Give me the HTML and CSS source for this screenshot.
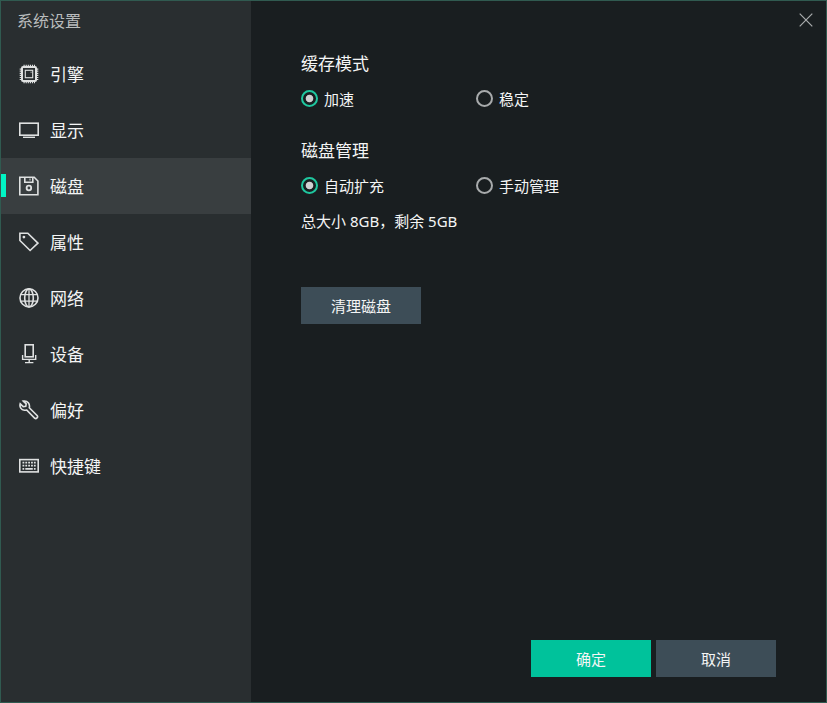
FILE: index.html
```html
<!DOCTYPE html>
<html lang="zh-CN">
<head>
  <meta charset="UTF-8">
  <title>系统设置</title>
  <link rel="stylesheet" href="styles.css">
</head>
<body>

  <div class="window">
    <!-- 左侧菜单 -->
    <div class="sidebar">
      <h1>系统设置</h1>
      <ul class="menu">
        <li>
          <svg viewBox="0 0 20 20"><rect x="3" y="3" width="14" height="14" rx="1" stroke-width="2"/><rect x="6.3" y="6.3" width="7.4" height="7.4" stroke-width="1.1"/><path d="M4.5 1.5H16M4.5 18.5H16M1.5 4.5V16M18.5 4.5V16" stroke-width="1.6" stroke-dasharray="1.2 .9"/><path d="M11.6 8.2h1" stroke-width="1"/></svg>
          <span>引擎</span>
        </li>
        <li>
          <svg viewBox="0 0 20 20"><rect x=".8" y="3.2" width="18.4" height="12"/><path d="M4 17.3h12" stroke-width="1.4"/></svg>
          <span>显示</span>
        </li>
        <li class="active">
          <svg viewBox="0 0 20 20"><path d="M.8 1.2H15.2L18.9 5V18.8H.8ZM5.8 1.2V6.3H13.8V1.2"/><path d="M11 2.5V4.5" stroke-width="1"/><circle cx="9.9" cy="12" r="2.3" stroke-width="1.8"/></svg>
          <span>磁盘</span>
        </li>
        <li>
          <svg viewBox="0 0 20 20"><path d="M.9 1.2H8.8L18.9 11.1L11.1 18.5L.9 8.5Z"/><circle class="dot" cx="4.9" cy="5.1" r="1.4"/></svg>
          <span>属性</span>
        </li>
        <li>
          <svg viewBox="0 0 20 20"><circle cx="10" cy="9.9" r="9"/><ellipse cx="10" cy="9.9" rx="4.3" ry="9"/><path d="M10 1V19M1.9 6.6H18.1M1.9 13.2H18.1" stroke-width="1.3"/></svg>
          <span>网络</span>
        </li>
        <li>
          <svg viewBox="0 0 20 20"><rect x="6.2" y=".8" width="8" height="12"/><path d="M3.6 11V15.4H16.7V11M10.2 15.4V18.5M6 18.6H14.4" stroke-width="1.4"/></svg>
          <span>设备</span>
        </li>
        <li>
          <svg viewBox="0 0 20 20"><path d="M4.3 1.1L7.2 3.9L6.8 6.2L4.2 6.6L1.2 3.8C.3 6.8 2.2 10 5.3 10.3C6.2 10.4 7.2 10.2 7.8 10.1L15.8 18.3C17.3 19.2 19.3 17.2 18.3 15.8L10.3 7.8C11.2 4.2 8.7.3 4.3 1.1Z"/></svg>
          <span>偏好</span>
        </li>
        <li>
          <svg viewBox="0 0 20 20"><rect x=".8" y="3.6" width="18.4" height="12.3"/><path d="M3.5 6.7H17M3.5 9.7H17" stroke-width="1.7" stroke-dasharray="1.8 1.05"/><path d="M3.5 12.9H5.2M6.3 12.9H13.8M14.9 12.9H16.6"/></svg>
          <span>快捷键</span>
        </li>
      </ul>
    </div>

    <!-- 右侧内容 -->
    <div class="content">
      <div class="titlebar">
        <svg class="close" viewBox="0 0 14 14"><path d="M.7.7L13.3 13.3M13.3.7L.7 13.3"/></svg>
      </div>

      <div class="settings">
        <h2>缓存模式</h2>
        <div class="radio-group">
          <label><input type="radio" name="cache" checked>加速</label>
          <label><input type="radio" name="cache">稳定</label>
        </div>

        <h2>磁盘管理</h2>
        <div class="radio-group">
          <label><input type="radio" name="disk" checked>自动扩充</label>
          <label><input type="radio" name="disk">手动管理</label>
        </div>
        <p class="disk-info">总大小 8GB，剩余 5GB</p>

        <button>清理磁盘</button>
      </div>

      <div class="footer">
        <button class="primary">确定</button>
        <button>取消</button>
      </div>
    </div>
  </div>

</body>
</html>
```
FILE: styles.css
```css
* {
  box-sizing: border-box;
}

body {
  margin: 0;
  font-family: "Noto Sans", "Noto Sans CJK SC", sans-serif;
  font-size: 15px;
  color: #f4f5f5;
}

h1,
h2,
p,
ul {
  margin: 0;
  padding: 0;
  font-weight: normal;
}

.window {
  display: flex;
  width: 827px;
  height: 703px;
  border: 1px solid #305a50;
  background: #191e20;
}

.sidebar {
  width: 250px;
  background: #292e30;
}

h1 {
  height: 45px;
  padding-left: 16px;
  font-size: 16px;
  line-height: 41px;
  color: #b9bcbd;
}

.menu {
  list-style: none;
  font-size: 17px;
}

.menu li {
  display: flex;
  align-items: center;
  gap: 11px;
  height: 56px;
  padding-left: 18px;
}

.menu li.active {
  padding-left: 13px;
  border-left: 5px solid #00f5c4;
  border-image: linear-gradient(transparent 16px, #00f5c4 16px, #00f5c4 39px, transparent 39px) 0 0 0 5;
  background: #393e40;
}

.menu span {
  padding-bottom: 2px;
}

.menu svg {
  width: 20px;
  height: 20px;
  fill: none;
  stroke: #dfe1e1;
  stroke-width: 1.6;
}

.menu .dot {
  fill: #dfe1e1;
  stroke: none;
}

.content {
  display: flex;
  flex-direction: column;
  flex: 1;
}

.titlebar {
  display: flex;
  justify-content: flex-end;
  height: 50px;
  padding: 12px 13px 0 0;
}

.close {
  width: 14px;
  height: 14px;
  stroke: #a9acad;
  stroke-width: 1.2;
}

.settings {
  flex: 1;
  padding-left: 50px;
}

h2 {
  height: 26px;
  font-size: 17px;
  line-height: 26px;
}

.radio-group {
  display: flex;
  height: 61px;
  padding-top: 11px;
}

.radio-group label {
  display: flex;
  align-items: center;
  width: 175px;
  height: 21px;
}

input[type="radio"] {
  appearance: none;
  width: 17px;
  height: 17px;
  margin: 0 6px 0 0;
  border: 2px solid #a8abac;
  border-radius: 50%;
}

input[type="radio"]:checked {
  border-color: #1fc79f;
  background: radial-gradient(circle, #d0d0d2 3.4px, transparent 4.2px);
}

.disk-info {
  height: 76px;
  line-height: 20px;
  margin-top: -14px;
}

button {
  width: 120px;
  height: 37px;
  padding: 0;
  border: none;
  background: #3d4d57;
  color: #f4f5f5;
  font: inherit;
}

button.primary {
  background: #00c29b;
}

.footer {
  display: flex;
  justify-content: flex-end;
  gap: 5px;
  padding: 0 50px 25px 0;
}
```
